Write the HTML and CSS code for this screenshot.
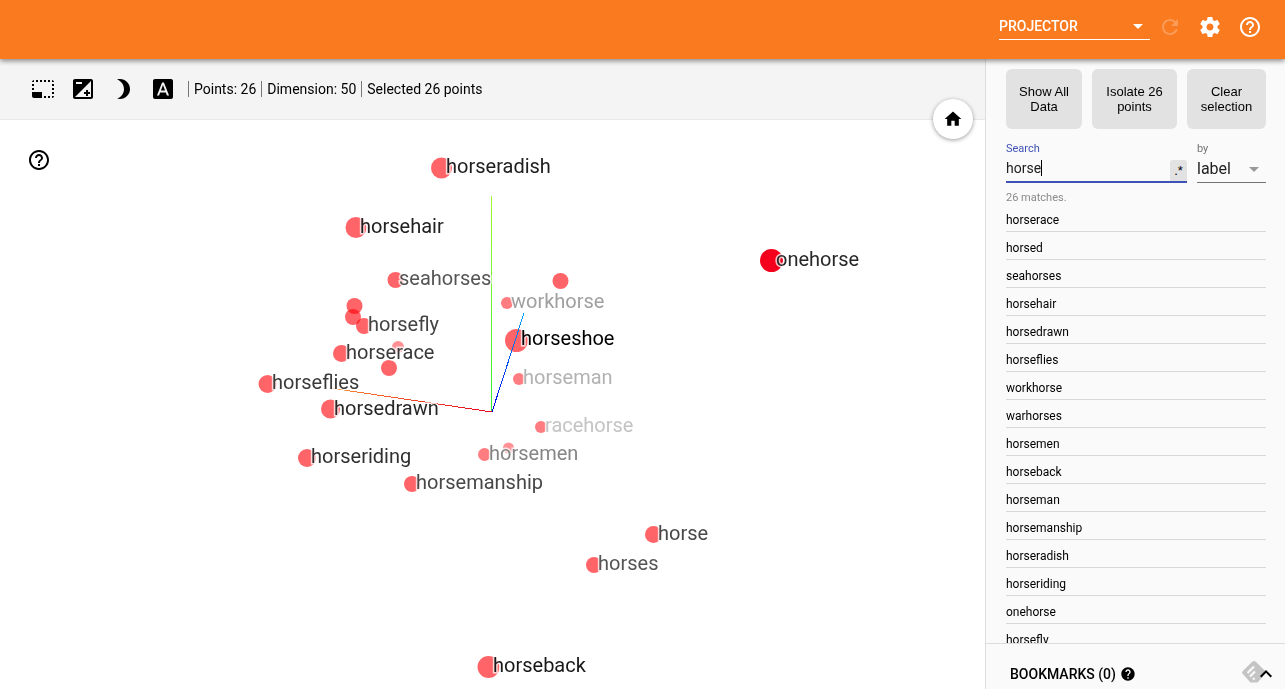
FILE: index.html
```html
<!DOCTYPE html>
<html lang="en">
<head>
<meta charset="utf-8">
<title>Projector</title>
<link rel="stylesheet" href="styles.css">
</head>
<body>
<header class="topbar">
  <div class="dashboard-picker">
    <select class="dashboard-select" aria-label="Dashboard"><option>PROJECTOR</option></select>
    <svg class="caret" viewBox="0 0 24 24" aria-hidden="true"><path d="M7 10l5 5 5-5z"/></svg>
  </div>
  <button class="icon-button" aria-label="Reload" disabled><svg viewBox="0 0 24 24"><path d="M17.65 6.35C16.2 4.9 14.21 4 12 4c-4.42 0-7.99 3.58-7.99 8s3.57 8 7.99 8c3.73 0 6.84-2.55 7.73-6h-2.08c-.82 2.33-3.04 4-5.65 4-3.31 0-6-2.69-6-6s2.69-6 6-6c1.66 0 3.14.69 4.22 1.78L13 11h7V4l-2.35 2.35z"/></svg></button>
  <button class="icon-button" aria-label="Settings"><svg viewBox="0 0 24 24"><path d="M19.43 12.98c.04-.32.07-.64.07-.98s-.03-.66-.07-.98l2.11-1.65c.19-.15.24-.42.12-.64l-2-3.46c-.12-.22-.39-.3-.61-.22l-2.49 1c-.52-.4-1.08-.73-1.69-.98l-.38-2.65C14.46 2.18 14.25 2 14 2h-4c-.25 0-.46.18-.49.42l-.38 2.65c-.61.25-1.17.59-1.69.98l-2.49-1c-.23-.09-.49 0-.61.22l-2 3.46c-.13.22-.07.49.12.64l2.11 1.65c-.04.32-.07.65-.07.98s.03.66.07.98l-2.11 1.65c-.19.15-.24.42-.12.64l2 3.46c.12.22.39.3.61.22l2.49-1c.52.4 1.08.73 1.69.98l.38 2.65c.03.24.24.42.49.42h4c.25 0 .46-.18.49-.42l.38-2.65c.61-.25 1.17-.59 1.69-.98l2.49 1c.23.09.49 0 .61-.22l2-3.46c.12-.22.07-.49-.12-.64l-2.11-1.65zM12 15.5c-1.93 0-3.5-1.57-3.5-3.5s1.57-3.5 3.5-3.5 3.5 1.57 3.5 3.5-1.57 3.5-3.5 3.5z"/></svg></button>
  <button class="icon-button" aria-label="Help"><svg viewBox="0 0 24 24"><path d="M11 18h2v-2h-2v2zm1-16C6.48 2 2 6.48 2 12s4.48 10 10 10 10-4.48 10-10S17.52 2 12 2zm0 18c-4.41 0-8-3.59-8-8s3.59-8 8-8 8 3.59 8 8-3.59 8-8 8zm0-14c-2.21 0-4 1.79-4 4h2c0-1.1.9-2 2-2s2 .9 2 2c0 2-3 1.75-3 5h2c0-2.25 3-2.5 3-5 0-2.21-1.79-4-4-4z"/></svg></button>
</header>

<div class="workspace">
  <main class="stage">
    <div class="toolbar">
      <button class="icon-button" aria-label="Bounding box selection"><svg viewBox="0 0 24 24"><path d="M23 15h-2v2h2v-2zm0-4h-2v2h2v-2zm0 8h-2v2c1 0 2-1 2-2zM15 3h-2v2h2V3zm8 4h-2v2h2V7zm-2-4v2h2c0-1-1-2-2-2zM3 21h8v-6H1v4c0 1.1.9 2 2 2zM3 7H1v2h2V7zm12 12h-2v2h2v-2zm4-16h-2v2h2V3zm0 16h-2v2h2v-2zM3 3C2 3 1 4 1 5h2V3zm0 8H1v2h2v-2zm8-8H9v2h2V3zM7 3H5v2h2V3z"/></svg></button>
      <button class="icon-button" aria-label="Edit color map"><svg viewBox="0 0 24 24"><path d="M15 17v2h2v-2h2v-2h-2v-2h-2v2h-2v2h2zm5-15H4c-1.1 0-2 .9-2 2v16c0 1.1.9 2 2 2h16c1.1 0 2-.9 2-2V4c0-1.1-.9-2-2-2zM5 5h6v2H5V5zm15 15H4L20 4v16z"/></svg></button>
      <button class="icon-button" aria-label="Night mode"><svg viewBox="0 0 24 24"><path d="M9 2c-1.05 0-2.05.16-3 .46 4.06 1.27 7 5.06 7 9.54 0 4.48-2.94 8.27-7 9.54.95.3 1.95.46 3 .46 5.52 0 10-4.48 10-10S14.52 2 9 2z"/></svg></button>
      <button class="icon-button" aria-label="3D labels"><svg viewBox="0 0 24 24"><path d="M9.93 13.5h4.14L12 7.98zM20 2H4c-1.1 0-2 .9-2 2v16c0 1.1.9 2 2 2h16c1.1 0 2-.9 2-2V4c0-1.1-.9-2-2-2zm-4.05 16.5l-1.14-3H9.17l-1.12 3H5.96l5.11-13h1.86l5.11 13h-2.09z"/></svg></button>
      <div class="stats"><span class="stat">Points: 26</span><span class="stat">Dimension: 50</span><span class="stat">Selected 26 points</span></div>
      <button class="home-button" aria-label="Reset zoom"><svg viewBox="0 0 24 24"><path d="M10 20v-6h4v6h5v-8h3L12 3 2 12h3v8z"/></svg></button>
    </div>
    <div class="plot">
      <svg class="scene" role="img" aria-label="Word embedding scatter plot">
        <defs>
          <linearGradient id="x-axis" gradientUnits="userSpaceOnUse" x1="492" y1="292" x2="315" y2="267"><stop offset="0" stop-color="#e8001c"/><stop offset="1" stop-color="#ff9c30"/></linearGradient>
          <linearGradient id="y-axis" gradientUnits="userSpaceOnUse" x1="492" y1="291" x2="492" y2="76"><stop offset="0" stop-color="#2df02d"/><stop offset="1" stop-color="#a0fa30"/></linearGradient>
          <linearGradient id="z-axis" gradientUnits="userSpaceOnUse" x1="492" y1="292" x2="524" y2="193"><stop offset="0" stop-color="#0000e8"/><stop offset="1" stop-color="#00a4ff"/></linearGradient>
        </defs>
        <g class="points">
          <circle cx="441.5" cy="48" r="10.5"/><circle cx="356" cy="107.5" r="10.5"/>
          <circle cx="395.5" cy="160" r="8"/><circle cx="560.5" cy="161" r="8"/>
          <circle cx="354.5" cy="186" r="8"/><circle cx="353" cy="197" r="8"/>
          <circle cx="364" cy="206" r="8"/><circle cx="341.5" cy="233.5" r="8.5"/>
          <circle cx="389" cy="248" r="8"/><circle cx="267.5" cy="264" r="9"/>
          <circle cx="330.500" cy="289" r="9.500"/><circle cx="307" cy="338" r="9"/>
          <circle cx="412" cy="364" r="8"/><circle cx="653.500" cy="414.500" r="8.500"/>
          <circle cx="594" cy="445" r="8"/><circle cx="488.500" cy="547" r="11"/>
          <circle cx="516.500" cy="220.500" r="11.500"/>
          <circle class="far" cx="507" cy="183" r="6"/><circle class="far" cx="519" cy="259" r="6"/>
          <circle class="far" cx="541" cy="307" r="6"/><circle class="far" cx="484.500" cy="334.500" r="6.500"/>
          <circle class="farther" cx="508.500" cy="328" r="5.500"/><circle class="farther" cx="398" cy="227" r="6"/>
          <circle class="hot" cx="771.500" cy="140.500" r="11.500"/>
        </g>
        <g class="axes" shape-rendering="crispEdges">
          <path stroke="url(#x-axis)" d="M492 292L330 268"/>
          <rect fill="url(#y-axis)" x="491" y="76" width="1" height="215"/>
          <path stroke="url(#z-axis)" d="M492 292L524 193"/>
        </g>
        <g class="labels">
          <text x="545" y="312" fill="#c4c4c4">racehorse</text>
          <text x="523" y="264" fill="#b2b2b2">horseman</text>
          <text x="511" y="188" fill="#a0a0a0">workhorse</text>
          <text x="489" y="340" fill="#858585">horsemen</text>
          <text x="399" y="165" fill="#555">seahorses</text>
          <text x="598" y="450" fill="#555">horses</text>
          <text x="658" y="420" fill="#484848">horse</text>
          <text x="416" y="369" fill="#484848">horsemanship</text>
          <text x="368" y="211" fill="#444">horsefly</text>
          <text x="346" y="239" fill="#3a3a3a">horserace</text>
          <text x="272" y="269" fill="#3a3a3a">horseflies</text>
          <text x="311" y="343" fill="#303030">horseriding</text>
          <text x="334" y="295" fill="#282828">horsedrawn</text>
          <text x="360" y="113" fill="#202020">horsehair</text>
          <text x="446" y="53" fill="#202020">horseradish</text>
          <text x="776" y="146" fill="#282828">onehorse</text>
          <text x="493" y="552" fill="#181818">horseback</text>
          <text x="521" y="225" fill="#000">horseshoe</text>
        </g>
      </svg>
      <button class="icon-button plot-help" aria-label="Plot help"><svg viewBox="0 0 24 24"><path d="M11 18h2v-2h-2v2zm1-16C6.48 2 2 6.48 2 12s4.48 10 10 10 10-4.48 10-10S17.52 2 12 2zm0 18c-4.41 0-8-3.59-8-8s3.59-8 8-8 8 3.59 8 8-3.59 8-8 8zm0-14c-2.21 0-4 1.79-4 4h2c0-1.1.9-2 2-2s2 .9 2 2c0 2-3 1.75-3 5h2c0-2.25 3-2.5 3-5 0-2.21-1.79-4-4-4z"/></svg></button>
    </div>
  </main>

  <aside class="inspector">
    <div class="panel">
      <div class="actions">
        <button class="action">Show All<br>Data</button>
        <button class="action">Isolate 26<br>points</button>
        <button class="action">Clear<br>selection</button>
      </div>
      <div class="search-row">
        <div class="field search-field">
          <label class="field-label" for="search">Search</label>
          <div class="field-box">
            <input class="search-input" id="search" type="text" value="horse">
            <span class="text-cursor"></span>
            <button class="regex-toggle" aria-label="Enable regex">.*</button>
          </div>
        </div>
        <div class="field by-field">
          <label class="field-label" for="by">by</label>
          <div class="field-box">
            <select class="by-select" id="by"><option>label</option></select>
            <svg class="caret" viewBox="0 0 24 24" aria-hidden="true"><path d="M7 10l5 5 5-5z"/></svg>
          </div>
        </div>
      </div>
      <p class="match-count">26 matches.</p>
      <ul class="matches">
        <li class="match">horserace</li><li class="match">horsed</li><li class="match">seahorses</li><li class="match">horsehair</li>
        <li class="match">horsedrawn</li><li class="match">horseflies</li><li class="match">workhorse</li><li class="match">warhorses</li>
        <li class="match">horsemen</li><li class="match">horseback</li><li class="match">horseman</li><li class="match">horsemanship</li>
        <li class="match">horseradish</li><li class="match">horseriding</li><li class="match">onehorse</li><li class="match">horsefly</li>
      </ul>
    </div>
    <div class="bookmarks">
      <span class="bookmarks-title">BOOKMARKS (0)</span>
      <svg class="bookmarks-help" viewBox="0 0 24 24" aria-hidden="true"><path d="M12 2C6.48 2 2 6.48 2 12s4.48 10 10 10 10-4.48 10-10S17.52 2 12 2zm1 17h-2v-2h2v2zm2.07-7.75l-.9.92C13.45 12.9 13 13.5 13 15h-2v-.5c0-1.1.45-2.1 1.17-2.83l1.24-1.26c.37-.36.59-.86.59-1.41 0-1.1-.9-2-2-2s-2 .9-2 2H8c0-2.21 1.79-4 4-4s4 1.79 4 4c0 .88-.36 1.68-.93 2.25z"/></svg>
      <button class="bookmarks-toggle" aria-label="Expand bookmarks"><svg viewBox="0 0 24 24"><path d="M12 8l-6 6 1.410 1.410L12 10.830l4.590 4.580L18 14z"/></svg></button>
      <svg class="feed-badge" viewBox="0 0 24 22" aria-hidden="true"><path fill="#c4c4c4" d="M10.200.7Q12 -.7 13.800.7L23.200 10Q24.500 11.500 23.200 13L15.500 21.500H8.500L.8 13Q-.5 11.500.8 10z"/><path fill="none" stroke="#fafafa" stroke-width="2.200" d="M5.500 12l6.500-6.500M8 15.500l5-5M11 18.500l1.500-1.500"/></svg>
    </div>
  </aside>
</div>
</body>
</html>
```
FILE: styles.css
```css
* { box-sizing: border-box; }
body {
  margin: 0;
  height: 100vh;
  display: flex;
  flex-direction: column;
  overflow: hidden;
  background: #fff;
  color: #000;
  font-family: Roboto, "Liberation Sans", sans-serif;
  font-size: 14px;
}
button { border: 0; padding: 0; background: none; color: inherit; cursor: pointer; }
select, input { border: 0; margin: 0; padding: 0; background: none; font-family: inherit; appearance: none; outline: none; border-radius: 0; }
svg { fill: currentColor; display: block; }

.topbar {
  position: relative;
  z-index: 2;
  flex: none;
  display: flex;
  justify-content: flex-end;
  align-items: center;
  height: 59px;
  padding: 0 15px 5px;
  background: #fa7a20;
  color: #fff;
  box-shadow: 0 2px 5px rgba(0, 0, 0, 0.45);
}
.icon-button { flex: none; width: 40px; height: 40px; display: grid; place-items: center; }
.icon-button svg { width: 24px; height: 24px; }
.icon-button:disabled { opacity: 0.25; }
.dashboard-picker { position: relative; width: 151px; margin-bottom: 2px; border-bottom: 1px solid #fff; }
.dashboard-select { display: block; width: 100%; height: 26px; color: #fff; font-size: 14px; font-weight: 500; }
.caret { position: absolute; right: 0; top: 1px; width: 24px; height: 24px; pointer-events: none; }

.workspace { flex: 1; min-height: 0; display: flex; }
.stage { flex: 1; min-width: 0; display: flex; flex-direction: column; }
.toolbar {
  position: relative;
  z-index: 1;
  flex: none;
  display: flex;
  align-items: center;
  height: 61px;
  padding: 0 23px;
  border-bottom: 1px solid #e8e8e8;
  background: #f4f4f4;
}
.stats { display: flex; padding-left: 5px; }
.stat { padding: 0 5px; border-left: 1px solid #777; line-height: 16px; }
.home-button {
  position: absolute;
  right: 12px;
  bottom: -20px;
  width: 40px;
  height: 40px;
  border-radius: 50%;
  background: #fff;
  box-shadow: 0 1px 4px rgba(0, 0, 0, 0.4);
  display: grid;
  place-items: center;
}
.home-button svg { width: 20px; height: 20px; }
.plot { position: relative; flex: 1; min-height: 0; }
.scene { width: 100%; height: 100%; }
.plot-help { position: absolute; left: 19px; top: 20px; }
.points { fill: #ff6469; mix-blend-mode: multiply; }
.points circle { mix-blend-mode: multiply; }
.points .far { fill: #ff7c80; }
.points .farther { fill: #ff9194; }
.points .hot { fill: #f4001c; }
.axes path { fill: none; stroke-width: 1px; }
.labels { font-size: 20px; stroke: rgba(255, 255, 255, 0.75); stroke-width: 3px; paint-order: stroke; }

.inspector { flex: none; width: 300px; display: flex; flex-direction: column; border-left: 1px solid #ddd; background: #fafafa; }
.panel { flex: 1; min-height: 0; overflow: hidden; padding: 10px 19px 0 20px; }
.actions { display: grid; grid-template-columns: 76fr 85fr 79fr; gap: 10px; }
.action {
  height: 60px;
  border-radius: 6px;
  background: #e2e2e2;
  font-family: "Liberation Sans", Arial, sans-serif;
  font-size: 13px;
  line-height: 15px;
}
.search-row { display: flex; gap: 10px; margin-top: 14px; }
.search-field { flex: 1; min-width: 0; }
.by-field { flex: none; width: 69px; }
.field-label { display: block; font-size: 11px; line-height: 12px; color: #737373; }
.search-field .field-label { color: #3f51b5; }
.field-box { position: relative; display: flex; align-items: center; height: 28px; border-bottom: 1px solid #737373; }
.search-field .field-box { border-bottom: 2px solid #3f51b5; }
.search-input { flex: 1; min-width: 0; height: 26px; font-size: 14px; color: #212121; }
.text-cursor { position: absolute; left: 35px; top: 5px; width: 1px; height: 16px; background: #000; }
.regex-toggle { width: 17px; height: 21px; border-radius: 3px 3px 0 0; background: #e2e2e2; align-self: flex-end; font-family: "Liberation Sans", sans-serif; font-size: 13px; }
.by-select { width: 100%; height: 26px; font-size: 16px; color: #212121; }
.by-field .caret { color: #999; top: 2px; }
.match-count { margin: 9px 0 0; color: #8a8a8a; font-size: 11px; line-height: 12px; }
.matches { list-style: none; margin: 0; padding: 0; }
.match { height: 28px; padding-top: 8px; border-bottom: 1px solid #d8d8d8; font-size: 12px; line-height: 16px; }
.bookmarks {
  position: relative;
  flex: none;
  display: flex;
  align-items: center;
  height: 46px;
  padding: 15px 7px 0 24px;
  border-top: 1px solid #ddd;
}
.bookmarks-title { font-weight: 500; }
.bookmarks-help { width: 16px; height: 16px; margin-left: 4px; }
.bookmarks-toggle { position: relative; z-index: 1; margin-left: auto; }
.bookmarks-toggle svg { width: 24px; height: 24px; }
.feed-badge { position: absolute; right: 19px; bottom: 6px; width: 24px; height: 22px; }
```
